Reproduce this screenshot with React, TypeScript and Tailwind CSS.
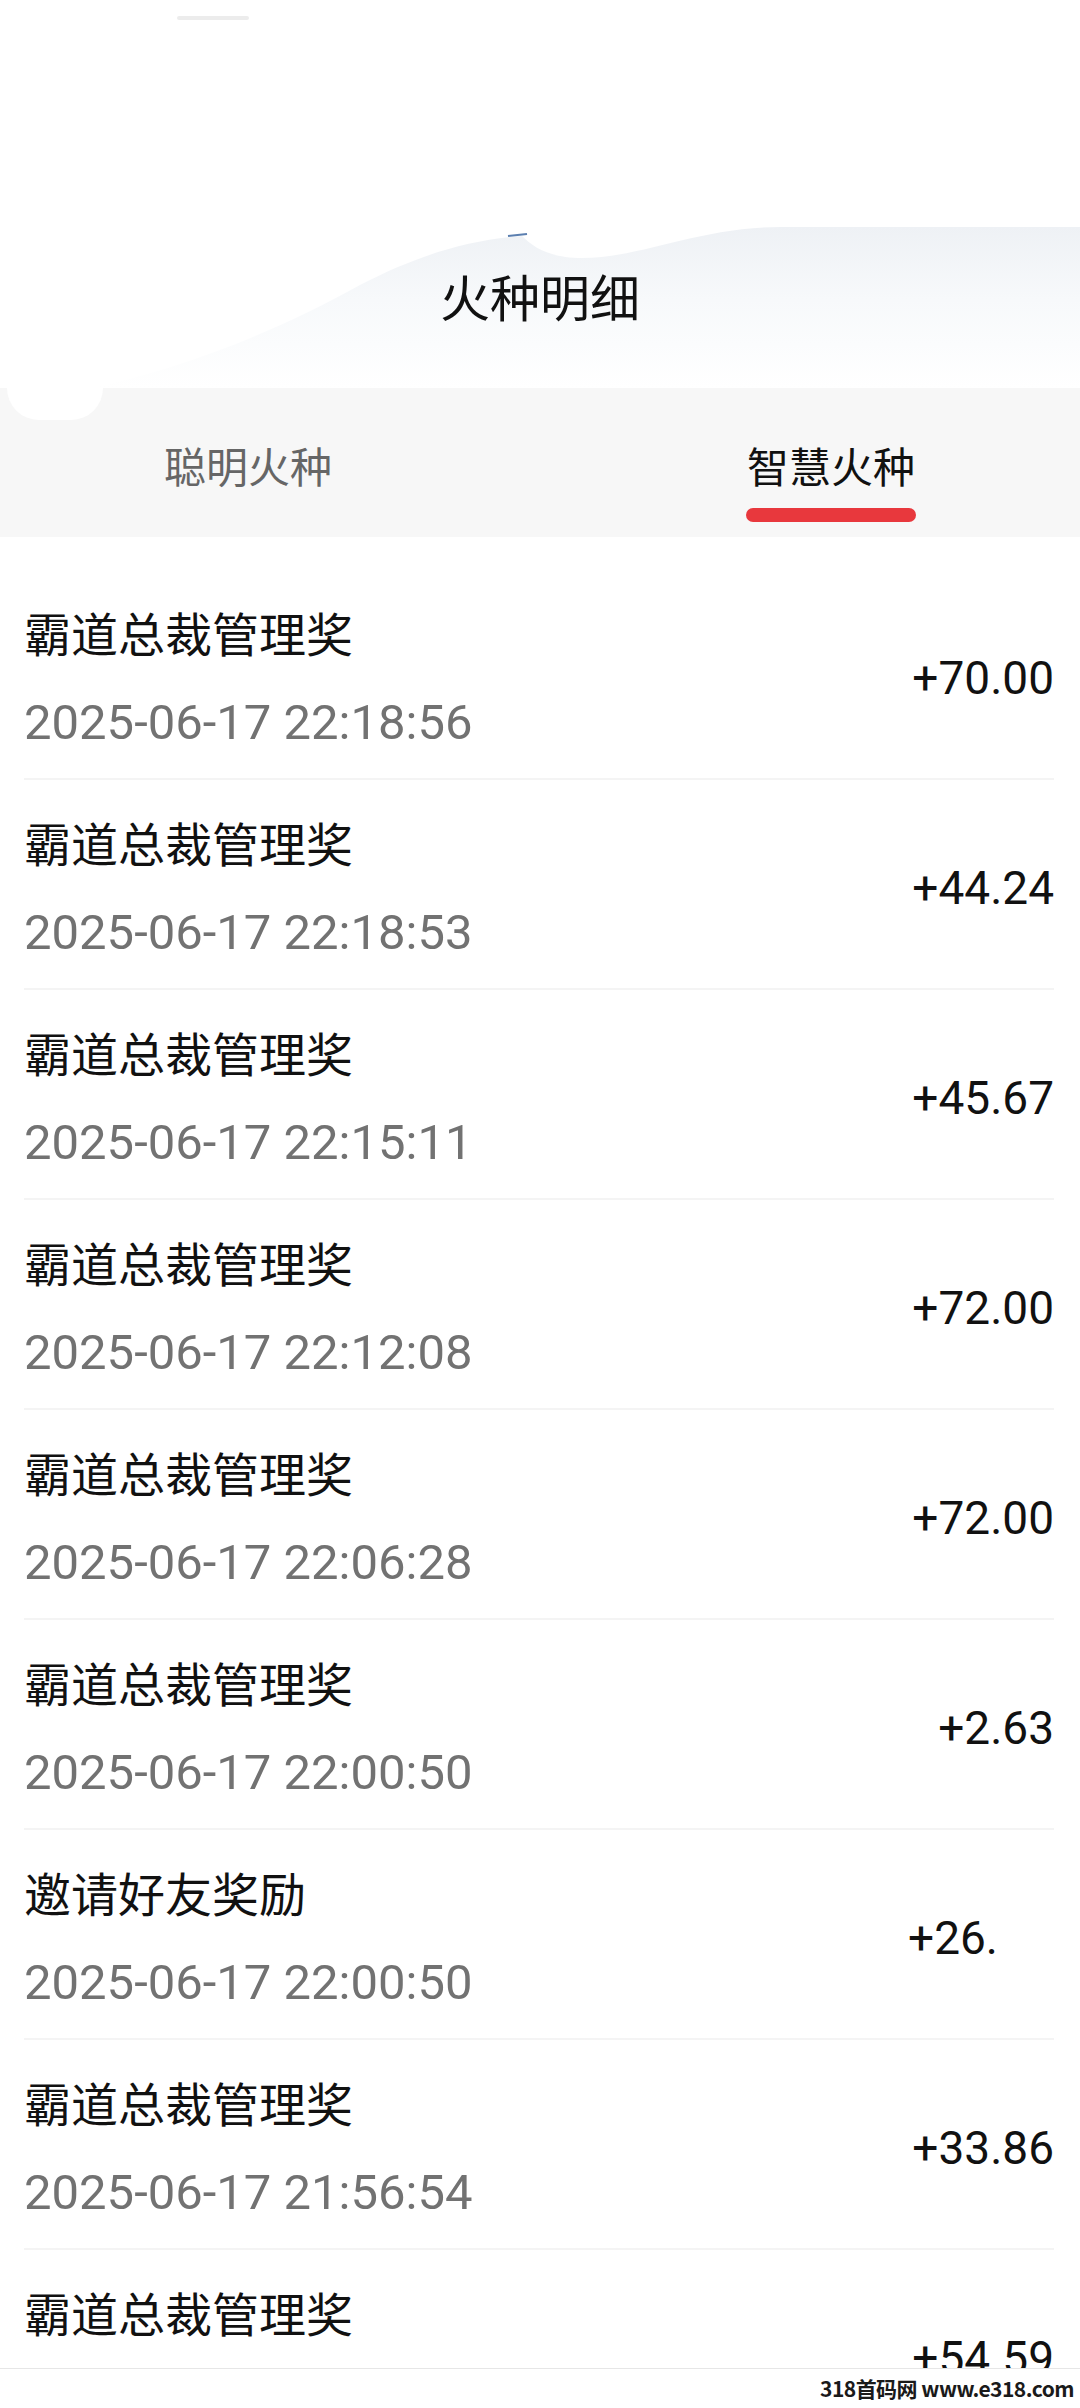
const rows = [
  { title: '霸道总裁管理奖', time: '2025-06-17 22:18:56', amount: '+70.00' },
  { title: '霸道总裁管理奖', time: '2025-06-17 22:18:53', amount: '+44.24' },
  { title: '霸道总裁管理奖', time: '2025-06-17 22:15:11', amount: '+45.67' },
  { title: '霸道总裁管理奖', time: '2025-06-17 22:12:08', amount: '+72.00' },
  { title: '霸道总裁管理奖', time: '2025-06-17 22:06:28', amount: '+72.00' },
  { title: '霸道总裁管理奖', time: '2025-06-17 22:00:50', amount: '+2.63' },
  { title: '邀请好友奖励', time: '2025-06-17 22:00:50', amount: '+26.', short: true },
  { title: '霸道总裁管理奖', time: '2025-06-17 21:56:54', amount: '+33.86' },
  { title: '霸道总裁管理奖', time: '2025-06-17 21:52:40', amount: '+54.59' },
];

const cjk = "font-['Noto_Sans_CJK_SC',sans-serif]";
const num = "font-['Roboto','Noto_Sans_CJK_SC',sans-serif]";

export default function App() {
  return (
    <div className={`relative flex h-[2408px] w-[1080px] flex-col overflow-hidden bg-white ${cjk}`}>
      {/* Header */}
      <header className="relative h-[388px] shrink-0">
        <svg className="absolute inset-0" width="1080" height="388" viewBox="0 0 1080 388">
          <defs>
            <linearGradient id="wave" x1="0" y1="0" x2="0" y2="1">
              <stop offset="0" stopColor="#eef1f5" />
              <stop offset="0.45" stopColor="#f7f9fb" />
              <stop offset="1" stopColor="#ffffff" />
            </linearGradient>
          </defs>
          <path
            d="M1080,227 L780,227 C700,227 640,258 582,258 C548,258 532,246 522,236 C470,240 420,254 360,285 C280,330 180,370 90,388 L1080,388 Z"
            fill="url(#wave)"
          />
          <path d="M508,236 L527,234" stroke="#5b7fb0" strokeWidth="2" />
        </svg>
        <div className="relative ml-[177px] mt-[16px] h-[4px] w-[72px] rounded bg-[#ececec]" />
        <h1 className="relative mt-[245px] text-center text-[50px] leading-[60px] font-normal text-[#111]">
          火种明细
        </h1>
      </header>

      {/* Tabs */}
      <nav className="relative flex h-[149px] shrink-0 bg-[#f7f7f7] pt-[52px]">
        <div className="absolute left-[7px] top-0 h-[32px] w-[96px] rounded-b-full bg-white" />
        <div className="ml-[164px] flex flex-col items-center">
          <span className="text-[42px] leading-[50px] text-[#666]">聪明火种</span>
        </div>
        <div className="ml-auto mr-[164px] flex flex-col items-center">
          <span className="text-[42px] leading-[50px] text-[#111]">智慧火种</span>
          <span className="mt-[18px] h-[14px] w-[170px] rounded-full bg-[#e8383d]" />
        </div>
      </nav>

      {/* List */}
      <main className="flex-1 overflow-hidden pt-[33px]">
        {rows.map((r, i) => (
          <div
            key={i}
            className="mx-[24px] mr-[26px] flex items-center justify-between border-b-2 border-[#f4f4f4] pt-[34px] pb-[27px]"
          >
            <div className="flex flex-col">
              <span className="text-[47px] leading-[56px] text-[#111]">{r.title}</span>
              <span className={`mt-[35px] text-[49px] leading-[56px] text-[#727272] ${num}`}>{r.time}</span>
            </div>
            <span className={`text-[46px] leading-[56px] text-[#111] ${num} ${r.short ? 'mr-[56px]' : ''}`}>
              {r.amount}
            </span>
          </div>
        ))}
      </main>

      {/* Footer watermark */}
      <footer className="flex h-[40px] shrink-0 items-center justify-end border-t border-[#e6e6e6] bg-white pr-[6px]">
        <span className="text-[21px] font-bold tracking-tight text-[#1a1a1a]">318首码网 www.e318.com</span>
      </footer>
    </div>
  );
}
